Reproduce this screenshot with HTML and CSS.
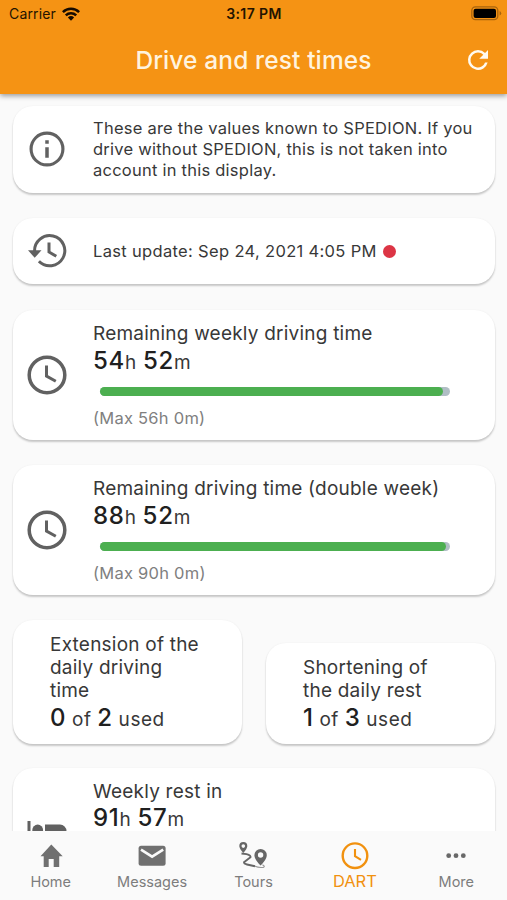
FILE: index.html
```html
<!DOCTYPE html>
<html lang="en">
<head>
<meta charset="utf-8">
<title>Drive and rest times</title>
<link rel="stylesheet" href="styles.css">
</head>
<body>
<div class="app">
  <header class="header">
    <div class="status">
      <div class="carrier"><span>Carrier</span>
        <svg width="18" height="14" viewBox="0 0 18 14" fill="none" stroke="#160b00" stroke-width="2.5"><path d="M.9 5.1a11.5 11.5 0 0 1 16.2 0M3.8 8.3a7.4 7.4 0 0 1 10.4 0"/><path d="M9 13.7 5.9 10.5a4.5 4.5 0 0 1 6.2 0z" fill="#160b00" stroke="none"/></svg>
      </div>
      <time class="clock">3:17 PM</time>
      <svg class="battery" width="31" height="15" viewBox="0 0 31 15"><rect x=".8" y=".9" width="26" height="12.8" rx="3.6" fill="none" stroke="#a8640d" stroke-width="1.3"/><rect x="2.6" y="2.7" width="22.4" height="9.2" rx="2" fill="#000"/><path d="M28.6 5v4.6q1.6-.7 1.6-2.3T28.6 5" fill="#a8640d"/></svg>
    </div>
    <div class="toolbar">
      <h1 class="title">Drive and rest times</h1>
      <svg class="refresh" width="30" height="30" viewBox="0 0 24 24" fill="#fffaf0"><path d="M17.65 6.35A7.96 7.96 0 0 0 12 4a8 8 0 1 0 7.73 10h-2.08A6 6 0 1 1 12 6c1.66 0 3.14.69 4.22 1.78L13 11h7V4z"/></svg>
    </div>
  </header>

  <main class="content">
    <section class="card info">
      <svg class="icon" width="42" height="42" viewBox="0 0 24 24" fill="#616161"><path d="M11 17h2v-6h-2zm1-15a10 10 0 1 0 0 20 10 10 0 0 0 0-20m0 18.200a8.200 8.200 0 1 1 0-16.400 8.200 8.200 0 0 1 0 16.400M11 9h2V7h-2z"/></svg>
      <p class="note">These are the values known to SPEDION. If you<br>drive without SPEDION, this is not taken into<br>account in this display.</p>
    </section>

    <section class="card update">
      <svg class="icon" width="42" height="42" viewBox="0 0 42 42" fill="none" stroke="#616161" stroke-width="3"><path d="M8.600 21.500A15.100 15.100 0 1 1 12.900 31.300M23 12.500v9.500l7.300 4.300"/><path d="M2 20.300h13.500L8.700 27.800z" fill="#616161" stroke="none"/></svg>
      <p class="stamp">Last update: Sep 24, 2021 4:05 PM</p>
      <span class="dot"></span>
    </section>

    <section class="card timer">
      <svg class="icon" width="42" height="42" viewBox="0 0 42 42" fill="none" stroke="#616161" stroke-width="3.500"><circle cx="21" cy="21" r="17.800"/><path d="M20.500 11.500v10.600l9.300 5.200" stroke-width="3"/></svg>
      <div class="detail">
        <h2 class="label">Remaining weekly driving time</h2>
        <p class="value"><b>54</b>h <b>52</b>m</p>
        <div class="track"><div class="fill" style="width:98%"></div></div>
        <p class="max">(Max 56h 0m)</p>
      </div>
    </section>

    <section class="card timer">
      <svg class="icon" width="42" height="42" viewBox="0 0 42 42" fill="none" stroke="#616161" stroke-width="3.500"><circle cx="21" cy="21" r="17.800"/><path d="M20.500 11.500v10.600l9.300 5.200" stroke-width="3"/></svg>
      <div class="detail">
        <h2 class="label">Remaining driving time (double week)</h2>
        <p class="value"><b>88</b>h <b>52</b>m</p>
        <div class="track"><div class="fill" style="width:98.800%"></div></div>
        <p class="max">(Max 90h 0m)</p>
      </div>
    </section>

    <div class="pair">
      <section class="card usage">
        <h2 class="label">Extension of the<br>daily driving<br>time</h2>
        <p class="value"><b>0</b> of <b>2</b> used</p>
      </section>
      <section class="card usage">
        <h2 class="label">Shortening of<br>the daily rest</h2>
        <p class="value"><b>1</b> of <b>3</b> used</p>
      </section>
    </div>

    <section class="card rest">
      <svg class="icon bed" width="42" height="34" viewBox="0 0 42 34" fill="#616161"><path d="M1.500 1h3v18H19V4.500h15a6.500 6.500 0 0 1 6.500 6.500v17h-3v-5h-33v5h-3z"/><circle cx="11.700" cy="10" r="5.400"/></svg>
      <div class="detail">
        <h2 class="label">Weekly rest in</h2>
        <p class="value"><b>91</b>h <b>57</b>m</p>
      </div>
    </section>
  </main>

  <nav class="nav">
    <a class="tab"><svg width="30" height="30" viewBox="0 0 30 30" fill="#707070"><path d="M12.700 26v-8h5v8h5.500V15.200h3.500L15.300 3.500 4.500 15.200h3.200V26z"/></svg><span>Home</span></a>
    <a class="tab"><svg width="32" height="30" viewBox="0 0 32 30" fill="#707070"><rect x="2.600" y="4.800" width="27" height="20" rx="2.500"/><path d="m5 8.600 11.100 7 11.100-7" fill="none" stroke="#fafafa" stroke-width="2.600"/></svg><span>Messages</span></a>
    <a class="tab"><svg width="30" height="30" viewBox="0 0 30 30"><path fill="#666" fill-rule="evenodd" d="M5.300 1a4 4 0 0 0-4 4c0 2.700 4 7 4 7s4-4.300 4-7a4 4 0 0 0-4-4m0 2.300a1.800 1.800 0 1 1 0 3.600 1.800 1.800 0 0 1 0-3.600M22.600 8a6.200 6.200 0 0 0-6.200 6.200c0 4.300 6.200 10.300 6.200 10.300s6.200-6 6.200-10.300A6.200 6.200 0 0 0 22.600 8m0 3.300a2.700 2.700 0 1 1 0 5.400 2.700 2.700 0 0 1 0-5.400"/><path d="m3.500 12.500 5 .6q4.500 1.300 4 3.200l-6.500 5q0 1.500 3 2.200l8 1.800" fill="none" stroke="#666" stroke-width="1.900"/><path d="M17 25.300q4 1.700 8.500 1 2-.9-1-2.500" fill="none" stroke="#999" stroke-width="1.200"/></svg><span>Tours</span></a>
    <a class="tab active"><svg width="30" height="30" viewBox="0 0 30 30" fill="none" stroke="#f1910f" stroke-width="2.400"><circle cx="15" cy="14.700" r="12.300"/><path d="M15 8v7.200l6 3.700" stroke-width="2.100"/></svg><span>DART</span></a>
    <a class="tab"><svg width="30" height="30" viewBox="0 0 30 30" fill="#686868"><circle cx="7.700" cy="14.700" r="2.400"/><circle cx="15" cy="14.700" r="2.400"/><circle cx="22.300" cy="14.700" r="2.400"/></svg><span>More</span></a>
  </nav>
</div>
</body>
</html>
```
FILE: styles.css
```css
* { box-sizing: border-box; margin: 0; padding: 0; }
body { font-family: Inter, "Liberation Sans", sans-serif; color: #383838; background: #fafafa; }
svg { display: block; flex: none; }
.app { display: flex; flex-direction: column; height: 900px; overflow: hidden; }
.header { flex: none; height: 94px; background: #f59314; box-shadow: 0 2px 5px rgba(0,0,0,.38); z-index: 1; }
.status { display: grid; grid-template-columns: 1fr auto 1fr; align-items: center; height: 27px; padding: 0 5px 0 6px; color: #241300; }
.carrier { display: flex; align-items: center; gap: 6px; font-size: 14px; letter-spacing: .15px; padding-left: 3px; }
.clock { font-size: 14px; font-weight: 600; letter-spacing: .4px; }
.battery { justify-self: end; }
.toolbar { display: grid; grid-template-columns: 1fr auto 1fr; align-items: center; height: 66px; }
.title { grid-column: 2; font-size: 24.500px; line-height: 28px; font-weight: 500; letter-spacing: .12px; color: #fff3df; }
.refresh { justify-self: end; margin-right: 14px; }
.content { flex: 1; min-height: 0; overflow: hidden; display: flex; flex-direction: column; gap: 25.500px; padding: 12px 12px 0 13px; }
.card { flex: none; display: flex; background: #fff; border-radius: 20px; box-shadow: 0 2px 2px rgba(0,0,0,.2), 0 0 2px rgba(0,0,0,.05); }
.icon { margin: 0 25px 0 13px; }
.info { height: 86.500px; align-items: center; }
.note { font-size: 16.500px; line-height: 20.700px; letter-spacing: .24px; white-space: nowrap; }
.update { height: 66px; align-items: center; }
.stamp { font-size: 16.500px; line-height: 20px; margin-top: -1px; letter-spacing: .33px; }
.dot { width: 13px; height: 13px; border-radius: 50%; background: #dc3545; margin-left: 6px; }
.timer { height: 130px; align-items: center; }
.detail { flex: 1; align-self: flex-start; padding-top: 12px; white-space: nowrap; }
.label { font-size: 19px; line-height: 23px; font-weight: 400; letter-spacing: .22px; }
.value { margin-top: 1px; font-size: 19px; line-height: 30px; letter-spacing: .7px; }
.value b { font-size: 24px; font-weight: 500; color: #202020; }
.track { width: 350px; height: 9px; margin: 9px 0 0 7px; border-radius: 5px; background: #b0bec5; }
.fill { height: 9px; border-radius: 5px; background: #4caf50; }
.max { margin-top: 12px; font-size: 16.500px; line-height: 21px; letter-spacing: .25px; color: #808080; }
.pair { flex: none; display: grid; grid-template-columns: 1fr 1fr; gap: 24px; align-items: end; margin-top: -.5px; }
.usage { display: block; padding: 13px 12px 8.500px 37px; white-space: nowrap; }
.usage .value { letter-spacing: .55px; }
.rest { height: 130px; margin-top: -1.500px; }
.rest .value { margin-top: 3px; line-height: 24px; }
.bed { margin-top: 52px; }
.nav { flex: none; height: 69px; background: #fafafa; display: grid; grid-template-columns: repeat(5, 1fr); padding-top: 10px; z-index: 1; }
.tab { display: flex; flex-direction: column; align-items: center; font-size: 14.500px; line-height: 21px; color: #7d7d7d; }
.active { color: #f1910f; font-size: 16.500px; line-height: 20px; }
```
